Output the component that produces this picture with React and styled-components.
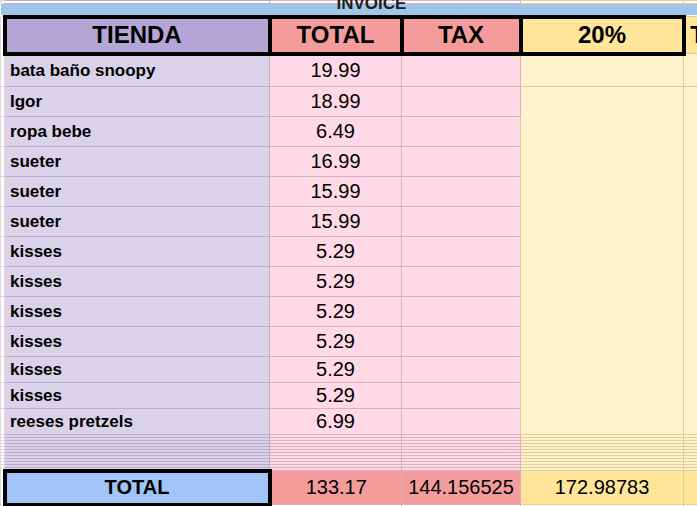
import React from 'react';
import styled, { createGlobalStyle } from 'styled-components';

const GlobalStyle = createGlobalStyle`
  html, body {
    margin: 0;
    padding: 0;
    background: #fff;
    overflow: hidden;
  }
  body {
    font-family: 'Liberation Sans', Arial, sans-serif;
  }
`;

// colours per column kind: header fill, body fill, footer fill, grid line
const tones = {
  gutter: { head: '#ffffff', body: '#ffffff', foot: '#ffffff', line: '#dadada' },
  name: { head: '#b4a7d6', body: '#d9d2e9', foot: '#a0c4f7', line: '#b8aecb' },
  total: { head: '#f49c9c', body: '#ffd9e6', foot: '#f49c9c', line: '#dab1c1' },
  tax: { head: '#f49c9c', body: '#ffd9e6', foot: '#f49c9c', line: '#dab1c1' },
  pct: { head: '#ffe599', body: '#fff2cc', foot: '#ffe599', line: '#dfcd9c' },
  extra: { head: '#ffe599', body: '#fff2cc', foot: '#ffe599', line: '#dfcd9c' },
};

const columns = [
  { key: 'gutter', width: 4 },
  { key: 'name', width: 265 },
  { key: 'total', width: 132 },
  { key: 'tax', width: 119 },
  { key: 'pct', width: 163 },
  { key: 'extra', width: 163 },
];

const items = [
  ['bata baño snoopy', '19.99', 33],
  ['Igor', '18.99', 30],
  ['ropa bebe', '6.49', 30],
  ['sueter', '16.99', 30],
  ['sueter', '15.99', 30],
  ['sueter', '15.99', 30],
  ['kisses', '5.29', 30],
  ['kisses', '5.29', 30],
  ['kisses', '5.29', 30],
  ['kisses', '5.29', 30],
  ['kisses', '5.29', 26],
  ['kisses', '5.29', 26],
  ['reeses pretzels', '6.99', 26],
];

const Sheet = styled.div`
  width: 697px;
  height: 506px;
  overflow: hidden;
  background: #fff;
`;

const Grid = styled.table`
  border-collapse: collapse;
  table-layout: fixed;
  width: ${(p) => p.$width}px;
  color: #000;
  font-family: 'Liberation Sans', Arial, sans-serif;
`;

const Row = styled.tr`
  height: ${(p) => p.$h}px;
`;

const Cell = styled.td`
  padding: 0;
  background: ${(p) => p.$bg};
  border: 1px solid ${(p) => p.$line};
  white-space: nowrap;
  overflow: hidden;
  vertical-align: middle;
`;

const BandCell = styled.td`
  position: relative;
  padding: 0;
  background: #9fc5e8;
  border: none;
  overflow: visible;
`;

const BandTitle = styled.span`
  position: absolute;
  left: 336px;
  top: -9px;
  font-size: 17px;
  line-height: 17px;
  font-weight: 700;
  color: #1d1d1d;
  white-space: nowrap;
`;

const HeadCell = styled(Cell)`
  border: ${(p) => (p.$boxed ? '4px solid #000' : `1px solid ${p.$line}`)};
  font-size: 24px;
  font-weight: 700;
  text-align: center;
`;

const NameCell = styled(Cell)`
  font-size: 17px;
  font-weight: 700;
  padding-left: 5px;
  text-align: left;
`;

const NumCell = styled(Cell)`
  font-size: 20px;
  text-align: center;
`;

const FootCell = styled(Cell)`
  border: ${(p) => (p.$boxed ? '4px solid #000' : `1px solid ${p.$line}`)};
  font-size: 20px;
  font-weight: ${(p) => (p.$bold ? 700 : 400)};
  text-align: center;
`;

function BlankRow({ h, fill = 'body' }) {
  return (
    <Row $h={h}>
      {columns.map((c) => (
        <Cell key={c.key} $bg={fill === 'white' ? '#fff' : tones[c.key][fill]} $line={tones[c.key].line} />
      ))}
    </Row>
  );
}

export default function App() {
  const tableWidth = columns.reduce((s, c) => s + c.width, 0);
  const headers = { gutter: '', name: 'TIENDA', total: 'TOTAL', tax: 'TAX', pct: '20%', extra: 'TOTAL + TAX' };
  const mergedRows = items.length - 1;

  return (
    <>
      <GlobalStyle />
      <Sheet>
        <Grid $width={tableWidth}>
          <colgroup>
            {columns.map((c) => (
              <col key={c.key} style={{ width: c.width }} />
            ))}
          </colgroup>
          <tbody>
            <BlankRow h={3} fill="white" />
            <Row $h={13}>
              <BandCell colSpan={columns.length}>
                <BandTitle>INVOICE</BandTitle>
              </BandCell>
            </Row>
            <Row $h={37}>
              {columns.map((c) => (
                <HeadCell
                  key={c.key}
                  $boxed={c.key !== 'gutter' && c.key !== 'extra'}
                  $bg={tones[c.key].head}
                  $line={tones[c.key].line}
                >
                  {headers[c.key]}
                </HeadCell>
              ))}
            </Row>
            {items.map(([name, value, h], i) => (
              <Row key={i} $h={h}>
                <Cell $bg="#fff" $line={tones.gutter.line} />
                <NameCell $bg={tones.name.body} $line={tones.name.line}>
                  {name}
                </NameCell>
                <NumCell $bg={tones.total.body} $line={tones.total.line}>
                  {value}
                </NumCell>
                <Cell $bg={tones.tax.body} $line={tones.tax.line} />
                {i < 2 && (
                  <>
                    <Cell rowSpan={i === 1 ? mergedRows : 1} $bg={tones.pct.body} $line={tones.pct.line} />
                    <Cell rowSpan={i === 1 ? mergedRows : 1} $bg={tones.extra.body} $line={tones.extra.line} />
                  </>
                )}
              </Row>
            ))}
            {Array.from({ length: 12 }, (_, i) => (
              <BlankRow key={`s${i}`} h={3} />
            ))}
            <Row $h={34}>
              <FootCell $bg="#fff" $line={tones.gutter.line} />
              <FootCell $boxed $bold $bg={tones.name.foot} $line={tones.name.line}>
                TOTAL
              </FootCell>
              <FootCell $bg={tones.total.foot} $line={tones.total.line}>
                133.17
              </FootCell>
              <FootCell $bg={tones.tax.foot} $line={tones.tax.line}>
                144.156525
              </FootCell>
              <FootCell $bg={tones.pct.foot} $line={tones.pct.line}>
                172.98783
              </FootCell>
              <FootCell $bg={tones.extra.foot} $line={tones.extra.line} />
            </Row>
            <BlankRow h={20} fill="white" />
          </tbody>
        </Grid>
      </Sheet>
    </>
  );
}
